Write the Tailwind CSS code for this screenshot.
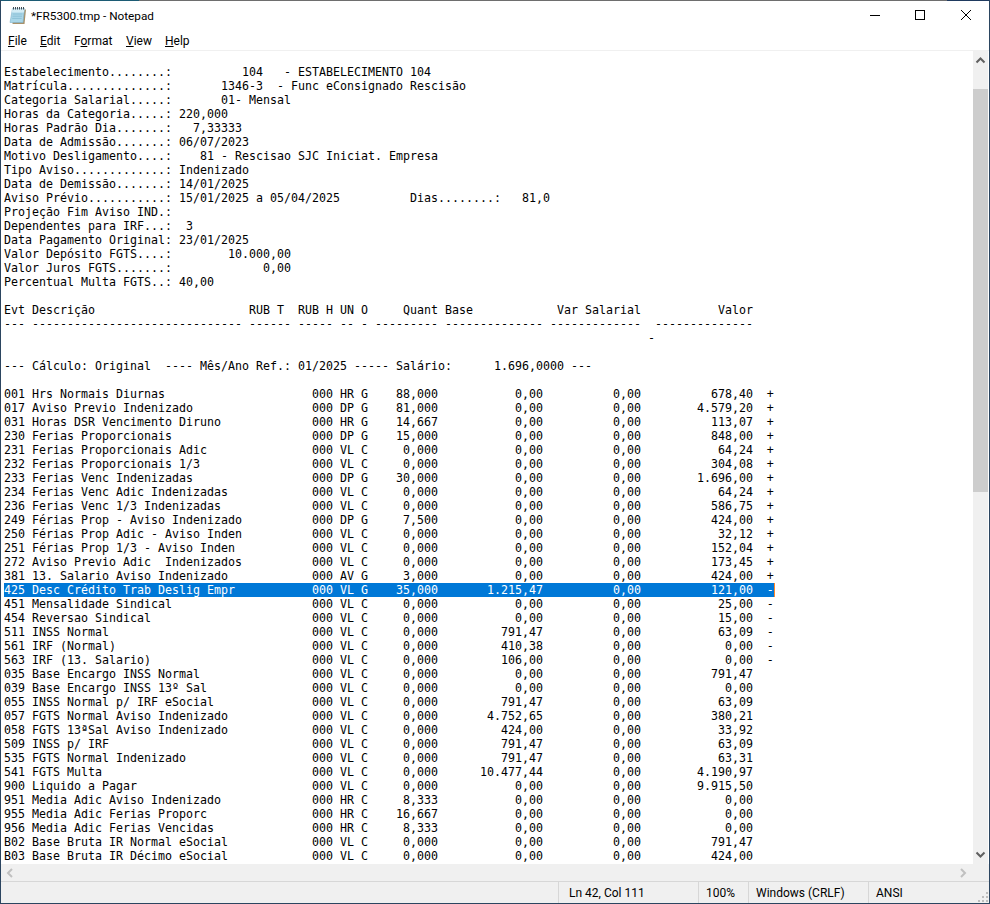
<!DOCTYPE html>
<html lang="pt">
<head>
<meta charset="utf-8">
<title>*FR5300.tmp - Notepad</title>
<script src="https://cdn.jsdelivr.net/npm/@tailwindcss/browser@4"></script>
</head>
<body class="bg-white">
<div class="w-[990px] h-[904px] flex flex-col overflow-hidden bg-white border-r border-b border-l border-[#2b4560] border-t-0 font-['Roboto',sans-serif] text-[12px] text-black">
  <div class="h-px shrink-0 flex">
    <div class="w-[138px] bg-[#1c5b74]"></div>
    <div class="w-[808px] bg-[#6e6e6e]"></div>
    <div class="flex-1 bg-[#1f3a5f]"></div>
  </div>
  <header class="h-[29px] shrink-0 flex items-center">
    <svg class="ml-[8px] w-[18px] h-[19px]" viewBox="0 0 18 19" aria-hidden="true">
      <path d="M4.500 3.500h12.500l-1.500 14.500H3.500z" fill="#a8916a"/>
      <path d="M3.500 2.500h12l-1.500 14H1z" fill="#a9d6e8" stroke="#7fb3cc" stroke-width="0.6"/>
      <path d="M3.500 2.500h12l-.6 4H2.900z" fill="#d3ecf5"/>
      <path d="M4.500 1v2.500M6.500 1v2.500M8.500 1v2.500M10.500 1v2.500M12.500 1v2.500M14.500 1v2.500" stroke="#3f4a52" stroke-width="1"/>
      <path d="M3.800 8h9.500M3.500 10.200h9.500M3.200 12.400h9.500" stroke="#85bbd2" stroke-width="0.8"/>
    </svg>
    <span class="ml-[4px] text-[11.75px] leading-none relative top-px">*FR5300.tmp - Notepad</span>
    <div class="ml-auto flex items-center h-full">
      <svg class="w-[46px] h-[29px]" viewBox="0 0 46 29" aria-hidden="true"><path d="M19 14.500h10" stroke="#000" stroke-width="1"/></svg>
      <svg class="w-[46px] h-[29px]" viewBox="0 0 46 29" aria-hidden="true"><rect x="18.500" y="9.500" width="9" height="9" fill="none" stroke="#000" stroke-width="1"/></svg>
      <svg class="w-[46px] h-[29px]" viewBox="0 0 46 29" aria-hidden="true"><path d="M18 9l10 10M28 9l-10 10" stroke="#000" stroke-width="1"/></svg>
    </div>
  </header>
  <nav class="h-[20px] shrink-0 flex items-center pl-[7px] leading-none">
    <span class="w-[32px] relative top-px"><span class="underline">F</span>ile</span>
    <span class="w-[34px] relative top-px"><span class="underline">E</span>dit</span>
    <span class="w-[52px] relative top-px">F<span class="underline">o</span>rmat</span>
    <span class="w-[39px] relative top-px"><span class="underline">V</span>iew</span>
    <span class="relative top-px"><span class="underline">H</span>elp</span>
  </nav>
  <div class="h-px shrink-0 bg-[#f0f0f0]"></div>
  <div class="flex-1 min-h-0 flex">
    <main class="flex-1 min-w-0 overflow-hidden pl-[3px]">
<pre class="relative font-['DejaVu_Sans_Mono',monospace] text-[11.63px] leading-[14px] text-black">
<span class="absolute left-0 top-[532px] w-[771px] h-[14px] bg-[#0078d7] border-r border-[#ff8728]"></span>
Estabelecimento........:          104   - ESTABELECIMENTO 104
Matrícula..............:       1346-3  - Func eConsignado Rescisão
Categoria Salarial.....:       01- Mensal
Horas da Categoria.....: 220,000
Horas Padrão Dia.......:   7,33333
Data de Admissão.......: 06/07/2023
Motivo Desligamento....:    81 - Rescisao SJC Iniciat. Empresa
Tipo Aviso.............: Indenizado
Data de Demissão.......: 14/01/2025
Aviso Prévio...........: 15/01/2025 a 05/04/2025          Dias........:   81,0
Projeção Fim Aviso IND.:
Dependentes para IRF...:  3
Data Pagamento Original: 23/01/2025
Valor Depósito FGTS....:        10.000,00
Valor Juros FGTS.......:             0,00
Percentual Multa FGTS..: 40,00

Evt Descrição                      RUB T  RUB H UN O     Quant Base            Var Salarial           Valor
--- ------------------------------ ------ ----- -- - --------- -------------- -------------  --------------
                                                                                            -

--- Cálculo: Original  ---- Mês/Ano Ref.: 01/2025 ----- Salário:      1.696,0000 ---

001 Hrs Normais Diurnas                     000 HR G    88,000           0,00          0,00          678,40  +
017 Aviso Previo Indenizado                 000 DP G    81,000           0,00          0,00        4.579,20  +
031 Horas DSR Vencimento Diruno             000 HR G    14,667           0,00          0,00          113,07  +
230 Ferias Proporcionais                    000 DP G    15,000           0,00          0,00          848,00  +
231 Ferias Proporcionais Adic               000 VL C     0,000           0,00          0,00           64,24  +
232 Ferias Proporcionais 1/3                000 VL C     0,000           0,00          0,00          304,08  +
233 Ferias Venc Indenizadas                 000 DP G    30,000           0,00          0,00        1.696,00  +
234 Ferias Venc Adic Indenizadas            000 VL C     0,000           0,00          0,00           64,24  +
236 Ferias Venc 1/3 Indenizadas             000 VL C     0,000           0,00          0,00          586,75  +
249 Férias Prop - Aviso Indenizado          000 DP G     7,500           0,00          0,00          424,00  +
250 Férias Prop Adic - Aviso Inden          000 VL C     0,000           0,00          0,00           32,12  +
251 Férias Prop 1/3 - Aviso Inden           000 VL C     0,000           0,00          0,00          152,04  +
272 Aviso Previo Adic  Indenizados          000 VL C     0,000           0,00          0,00          173,45  +
381 13. Salario Aviso Indenizado            000 AV G     3,000           0,00          0,00          424,00  +
<span class="relative text-white">425 Desc Crédito Trab Deslig Empr           000 VL G    35,000       1.215,47          0,00          121,00  -</span>
451 Mensalidade Sindical                    000 VL C     0,000           0,00          0,00           25,00  -
454 Reversao Sindical                       000 VL C     0,000           0,00          0,00           15,00  -
511 INSS Normal                             000 VL C     0,000         791,47          0,00           63,09  -
561 IRF (Normal)                            000 VL C     0,000         410,38          0,00            0,00  -
563 IRF (13. Salario)                       000 VL C     0,000         106,00          0,00            0,00  -
035 Base Encargo INSS Normal                000 VL C     0,000           0,00          0,00          791,47
039 Base Encargo INSS 13º Sal               000 VL C     0,000           0,00          0,00            0,00
055 INSS Normal p/ IRF eSocial              000 VL C     0,000         791,47          0,00           63,09
057 FGTS Normal Aviso Indenizado            000 VL C     0,000       4.752,65          0,00          380,21
058 FGTS 13ªSal Aviso Indenizado            000 VL C     0,000         424,00          0,00           33,92
509 INSS p/ IRF                             000 VL C     0,000         791,47          0,00           63,09
535 FGTS Normal Indenizado                  000 VL C     0,000         791,47          0,00           63,31
541 FGTS Multa                              000 VL C     0,000      10.477,44          0,00        4.190,97
900 Liquido a Pagar                         000 VL C     0,000           0,00          0,00        9.915,50
951 Media Adic Aviso Indenizado             000 HR C     8,333           0,00          0,00            0,00
955 Media Adic Ferias Proporc               000 HR C    16,667           0,00          0,00            0,00
956 Media Adic Ferias Vencidas              000 HR C     8,333           0,00          0,00            0,00
B02 Base Bruta IR Normal eSocial            000 VL C     0,000           0,00          0,00          791,47
B03 Base Bruta IR Décimo eSocial            000 VL C     0,000           0,00          0,00          424,00
</pre>
    </main>
    <aside class="w-[16px] shrink-0 bg-[#f0f0f0] border-r border-white flex flex-col items-center">
      <svg class="w-[15px] h-[17px] shrink-0" viewBox="0 0 15 17" aria-hidden="true"><path d="M3.500 11.500l4-4 4 4" fill="none" stroke="#606060" stroke-width="2"/></svg>
      <div class="h-[21px] shrink-0"></div>
      <div class="w-[15px] h-[403px] shrink-0 bg-[#cdcdcd]"></div>
      <div class="flex-1"></div>
      <svg class="w-[15px] h-[17px] shrink-0" viewBox="0 0 15 17" aria-hidden="true"><path d="M3.500 5.500l4 4 4-4" fill="none" stroke="#606060" stroke-width="2"/></svg>
    </aside>
  </div>
  <div class="h-[17px] shrink-0 bg-[#f0f0f0] flex items-center justify-between">
    <svg class="w-[17px] h-[16px]" viewBox="0 0 17 16" aria-hidden="true"><path d="M11 4l-4 4 4 4" fill="none" stroke="#c0c0c0" stroke-width="2"/></svg>
    <svg class="w-[17px] h-[16px] mr-[17px]" viewBox="0 0 17 16" aria-hidden="true"><path d="M6 4l4 4-4 4" fill="none" stroke="#c0c0c0" stroke-width="2"/></svg>
  </div>
  <footer class="h-[22px] shrink-0 bg-[#f0f0f0] border-t border-[#d7d7d7] flex items-stretch leading-none relative">
    <div class="w-[557px] shrink-0"></div>
    <div class="w-[140px] shrink-0 border-l border-[#d7d7d7] pl-[10px] flex items-center">Ln 42, Col 111</div>
    <div class="w-[50px] shrink-0 border-l border-[#d7d7d7] pl-[7px] flex items-center">100%</div>
    <div class="w-[120px] shrink-0 border-l border-[#d7d7d7] pl-[7px] flex items-center">Windows (CRLF)</div>
    <div class="flex-1 border-l border-[#d7d7d7] pl-[7px] flex items-center">ANSI</div>
    <svg class="absolute right-0 bottom-0 w-[12px] h-[12px]" viewBox="0 0 12 12" aria-hidden="true"><path d="M9 9h2v2H9zM5 9h2v2H5zM1 9h2v2H1zM9 5h2v2H9zM5 5h2v2H5zM9 1h2v2H9z" fill="#bdbdbd"/></svg>
  </footer>
</div>
</body>
</html>
